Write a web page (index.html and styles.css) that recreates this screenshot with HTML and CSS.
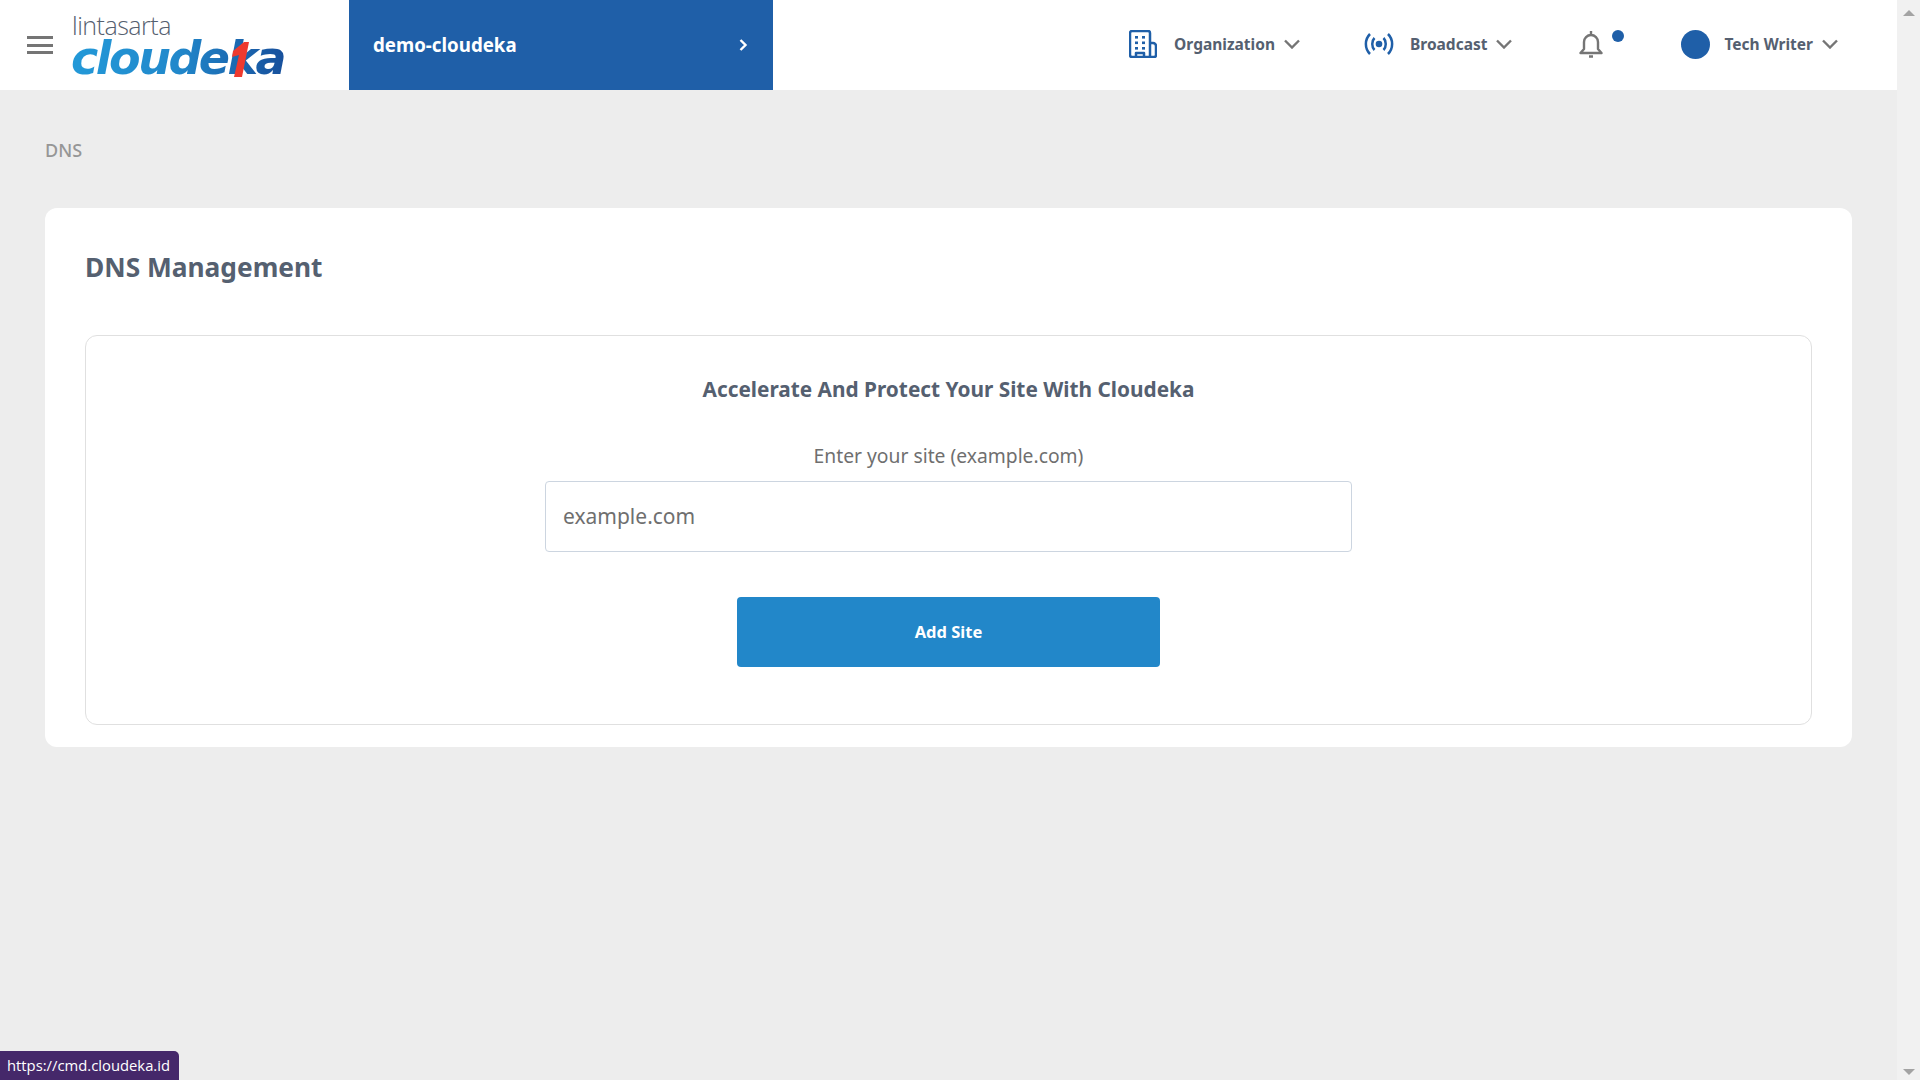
FILE: index.html
```html
<!DOCTYPE html>
<html lang="en">
  <head>
    <meta charset="UTF-8" />
    <meta name="viewport" content="width=device-width, initial-scale=1.0" />
    <title>DNS - Cloudeka</title>
    <link rel="stylesheet" href="styles.css">
  </head>
  <body>
    <div class="page">
      <header class="topbar">
        <div class="brand">
          <button class="menu-btn" aria-label="Menu">
            <span></span><span></span><span></span>
          </button>
          <div class="logo">
            <div class="logo-top">lintasarta</div>
            <div class="logo-main">cloudeka<svg class="logo-one" viewBox="0 0 17 35"><polygon points="12,0 17,0 10,35 2,35 7,13 0,15 1,9" /></svg></div>
          </div>
        </div>

        <a class="project">
          <span class="project-name">demo-cloudeka</span>
          <svg class="project-arrow" viewBox="0 0 10 14"><path d="M2.5 2l5 5-5 5" /></svg>
        </a>

        <nav class="nav">
          <div class="nav-item org">
            <svg class="nav-icon" viewBox="0 0 28 28">
              <path class="line" d="M21 27H3a2 2 0 0 1-2-2V3a2 2 0 0 1 2-2h16a2 2 0 0 1 2 2v24zM21 13h3a3 3 0 0 1 3 3v9a2 2 0 0 1-2 2h-4M7 27v-4h8v4" />
              <g class="dots">
                <rect x="6" y="6" width="3" height="2.6" /><rect x="13" y="6" width="3" height="2.6" />
                <rect x="6" y="11.500" width="3" height="2.6" /><rect x="13" y="11.500" width="3" height="2.6" />
                <rect x="6" y="17" width="3" height="2.6" /><rect x="13" y="17" width="3" height="2.6" />
              </g>
            </svg>
            <span>Organization</span>
            <svg class="caret" viewBox="0 0 16 10"><path d="M1 1.5l7 7 7-7" /></svg>
          </div>

          <div class="nav-item cast">
            <svg class="nav-icon" viewBox="0 0 30 22">
              <path class="line" d="M6 1C.5 6.500.5 15.500 6 21M10.500 5C7.500 8 7.500 14 10.500 17M19.500 5c3 3 3 9 0 12M24 1c5.500 5.500 5.500 14.500 0 20" />
              <circle class="dot" cx="15" cy="11" r="3.300" />
            </svg>
            <span>Broadcast</span>
            <svg class="caret" viewBox="0 0 16 10"><path d="M1 1.500l7 7 7-7" /></svg>
          </div>

          <div class="bell">
            <svg viewBox="0 0 24 28"><path d="M12 1v3M5 19V12a7 7 0 0 1 14 0v7l3.500 4H1.500zM10 26.500h4" /></svg>
            <span class="bell-dot"></span>
          </div>

          <div class="nav-item user">
            <span class="avatar"></span>
            <span>Tech Writer</span>
            <svg class="caret" viewBox="0 0 16 10"><path d="M1 1.500l7 7 7-7" /></svg>
          </div>
        </nav>
      </header>

      <main class="content">
        <div class="breadcrumb">DNS</div>
        <section class="card">
          <h1>DNS Management</h1>
          <div class="panel">
            <h2>Accelerate And Protect Your Site With Cloudeka</h2>
            <label for="site">Enter your site (example.com)</label>
            <input id="site" type="text" placeholder="example.com" />
            <button class="add-btn">Add Site</button>
          </div>
        </section>
      </main>
    </div>

    <div class="scrollbar">
      <span class="arrow-up"></span>
      <span class="arrow-down"></span>
    </div>

    <div class="url-tip">https://cmd.cloudeka.id</div>
  </body>
</html>
```

FILE: styles.css
```css
html,
body {
  height: 100%;
}
body {
  font-family: "Noto Sans", "Open Sans", sans-serif;
  margin: 0;
  display: flex;
  height: 1080px;
  overflow: hidden;
  background-color: #ededed;
  color: #556070;
}
.page {
  flex: 1;
  min-width: 0;
}
.topbar {
  display: flex;
  align-items: center;
  height: 90px;
  background: white;
}
.brand {
  display: flex;
  align-items: center;
  width: 349px;
  flex-shrink: 0;
  padding-left: 27px;
  box-sizing: border-box;
}
.menu-btn {
  display: flex;
  flex-direction: column;
  justify-content: space-between;
  width: 26px;
  height: 18px;
  padding: 0;
  margin-right: 18px;
  border: none;
  background: none;
}
.menu-btn span {
  display: block;
  height: 3px;
  background: #757575;
}
.logo {
  margin-top: -1px;
}
.logo-top {
  padding-left: 1px;
  font-family: "Open Sans", sans-serif;
  font-size: 25px;
  font-weight: 300;
  line-height: 26px;
  letter-spacing: -0.500px;
  color: #55606f;
}
.logo-main {
  position: relative;
  font-family: "DejaVu Sans", sans-serif;
  font-size: 46px;
  font-weight: 700;
  font-style: italic;
  line-height: 40px;
  letter-spacing: -2.500px;
  color: #2190d2;
  background: linear-gradient(90deg, #2399d8 0%, #2188cb 50%, #17509c 100%);
  -webkit-background-clip: text;
  background-clip: text;
  -webkit-text-fill-color: transparent;
}
.logo-one {
  position: absolute;
  left: 161px;
  top: 4px;
  width: 17px;
  height: 35px;
  fill: #ee3a2f;
}
.project {
  display: flex;
  align-items: center;
  justify-content: space-between;
  width: 424px;
  height: 90px;
  padding: 0 25px 0 24px;
  box-sizing: border-box;
  flex-shrink: 0;
  background: #1f5fa8;
  color: white;
  font-size: 18.700px;
  font-weight: 700;
}
.project-name {
  padding-bottom: 2px;
}
.project-arrow {
  width: 10px;
  height: 14px;
  fill: none;
  stroke: white;
  stroke-width: 2.400;
}
.nav {
  display: flex;
  align-items: center;
  margin-left: auto;
  padding-right: 59px;
  padding-bottom: 2px;
}
.nav-item {
  display: flex;
  align-items: center;
  font-size: 15.500px;
  font-weight: 700;
  color: #556070;
}
.nav-icon {
  display: block;
  fill: none;
}
.nav-icon .line {
  fill: none;
  stroke: #1f5fa8;
  stroke-width: 2.500;
  stroke-linejoin: round;
}
.nav-icon .dots rect,
.nav-icon .dot {
  fill: #1f5fa8;
}
.org .nav-icon {
  width: 28px;
  height: 28px;
  margin-right: 17px;
}
.cast {
  margin-left: 64px;
}
.cast .nav-icon {
  width: 30px;
  height: 22px;
  margin-right: 16px;
}
.caret {
  width: 16px;
  height: 10px;
  margin-left: 9px;
  fill: none;
  stroke: #757575;
  stroke-width: 2.400;
}
.bell {
  position: relative;
  width: 24px;
  height: 28px;
  margin-left: 67px;
}
.bell svg {
  display: block;
  width: 24px;
  height: 28px;
  fill: none;
  stroke: #757575;
  stroke-width: 2.400;
  stroke-linejoin: round;
}
.bell-dot {
  position: absolute;
  left: 33px;
  top: 0;
  width: 12px;
  height: 12px;
  border-radius: 50%;
  background: #1f5fa8;
}
.user {
  margin-left: 78px;
}
.avatar {
  width: 29px;
  height: 29px;
  margin-right: 14px;
  border-radius: 50%;
  background: #1f5fa8;
}
.content {
  padding: 0 45px;
}
.breadcrumb {
  padding-top: 48px;
  padding-bottom: 46px;
  font-size: 18px;
  font-weight: 500;
  line-height: 24px;
  color: #969696;
}
.card {
  height: 539px;
  padding: 0 40px;
  box-sizing: border-box;
  background: white;
  border-radius: 12px;
}
h1 {
  margin: 0;
  padding-top: 40px;
  height: 87px;
  font-size: 26.300px;
  font-weight: 700;
  line-height: 38px;
  color: #556070;
}
.panel {
  display: flex;
  flex-direction: column;
  align-items: center;
  height: 390px;
  box-sizing: border-box;
  border: 1px solid #e0e0e0;
  border-radius: 12px;
  padding-top: 38px;
}
h2 {
  margin: 0;
  font-size: 20.800px;
  font-weight: 700;
  line-height: 30px;
  color: #556070;
}
label {
  margin-top: 39px;
  font-size: 19.300px;
  line-height: 26px;
  color: #6f6f6f;
}
input {
  width: 807px;
  height: 71px;
  margin-top: 12px;
  padding: 0 17px 1px;
  box-sizing: border-box;
  border: 1px solid #ccd5e0;
  border-radius: 4px;
  font-family: inherit;
  font-size: 21px;
  background: white;
}
input::placeholder {
  color: #6f6f6f;
  opacity: 1;
}
.add-btn {
  width: 423px;
  height: 70px;
  margin-top: 45px;
  padding-bottom: 3px;
  border: none;
  border-radius: 4px;
  background: #2287c9;
  color: white;
  font-family: inherit;
  font-size: 16.500px;
  font-weight: 700;
}
.scrollbar {
  position: relative;
  width: 23px;
  flex-shrink: 0;
  background: #f1f1f1;
}
.arrow-up,
.arrow-down {
  position: absolute;
  left: 6px;
  width: 0;
  height: 0;
  border-left: 6px solid transparent;
  border-right: 6px solid transparent;
}
.arrow-up {
  top: 10px;
  border-bottom: 6px solid #a3a3a3;
}
.arrow-down {
  bottom: 5px;
  border-top: 6px solid #a3a3a3;
}
.url-tip {
  position: fixed;
  left: 0;
  bottom: 0;
  width: 179px;
  height: 29px;
  padding-left: 7px;
  box-sizing: border-box;
  border-top-right-radius: 5px;
  background: #45286a;
  color: white;
  font-family: "Open Sans", sans-serif;
  font-size: 14.800px;
  line-height: 29px;
  white-space: nowrap;
}
```
